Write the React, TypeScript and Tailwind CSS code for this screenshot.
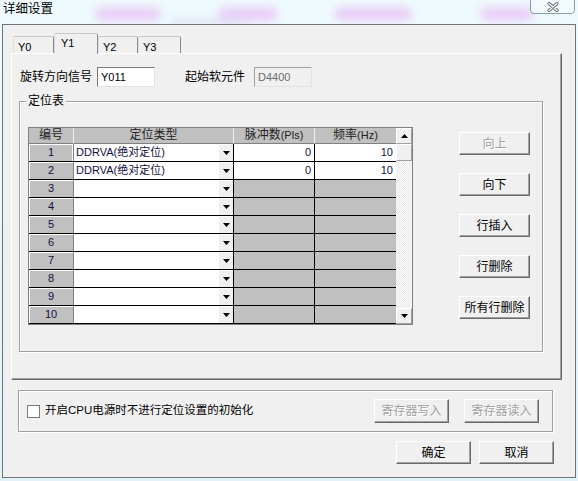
import React from 'react';

const rows = [
  { n: 1, type: 'DDRVA(绝对定位)', pls: '0', hz: '10' },
  { n: 2, type: 'DDRVA(绝对定位)', pls: '0', hz: '10' },
  { n: 3 },
  { n: 4 },
  { n: 5 },
  { n: 6 },
  { n: 7 },
  { n: 8 },
  { n: 9 },
  { n: 10 },
] as { n: number; type?: string; pls?: string; hz?: string }[];

function WinButton({ label, disabled, className = '' }: { label: string; disabled?: boolean; className?: string }) {
  return (
    <div
      className={`flex items-center justify-center border border-t-white border-l-white border-r-[#696969] border-b-[#696969] shadow-[inset_-1px_-1px_0_#a0a0a0] bg-[#f0f0f0] text-[12px] ${
        disabled ? 'text-[#a0a0a0] [text-shadow:1px_1px_0_#fff]' : 'text-black'
      } ${className}`}
    >
      {label}
    </div>
  );
}

function DownTriangle() {
  return (
    <svg width="7" height="4" viewBox="0 0 7 4">
      <path d="M0 0h7L3.5 4z" fill="#000" />
    </svg>
  );
}

function UpTriangle() {
  return (
    <svg width="7" height="4" viewBox="0 0 7 4">
      <path d="M0 4h7L3.5 0z" fill="#000" />
    </svg>
  );
}

function Table() {
  return (
    <div className="flex border border-[#808080] bg-[#c0c0c0] w-[385px] h-[198px]">
      <div className="flex flex-col w-[367px]">
        <div className="flex h-[16px] text-[12px] leading-[15px] text-[#222]">
          <div className="w-[45px] bg-[#c0c0c0] border-r border-r-[#f0f0f0] border-b border-b-[#808080] text-center">编号</div>
          <div className="w-[160px] bg-[#c0c0c0] border-r border-r-[#f0f0f0] border-b border-b-[#808080] text-center">定位类型</div>
          <div className="w-[81px] bg-[#c0c0c0] border-r border-r-[#f0f0f0] border-b border-b-[#808080] text-center">
            脉冲数<span className="text-[11px]">(Pls)</span>
          </div>
          <div className="w-[81px] bg-[#c0c0c0] border-b border-b-[#808080] text-center">
            频率<span className="text-[11px]">(Hz)</span>
          </div>
        </div>
        {rows.map((r) => (
          <div key={r.n} className="flex h-[18px] border-b border-black text-[11px] text-[#101040]">
            <div
              className={`w-[45px] flex items-center justify-center bg-[#c0c0c0] border-r border-r-[#808080] ${
                r.n === 1 ? 'shadow-[inset_1px_1px_0_#fff,inset_-1px_0_0_#fff]' : 'shadow-[inset_1px_1px_0_#fff]'
              }`}
            >
              {r.n}
            </div>
            <div className="w-[160px] flex items-stretch bg-white border-r border-black">
              <div className="flex-1 flex items-center pl-[2px] whitespace-nowrap">{r.type ?? ''}</div>
              <div className="w-[15px] flex items-center justify-center bg-[#f0f0f0] border-t border-l border-t-white border-l-white">
                <DownTriangle />
              </div>
            </div>
            <div
              className={`w-[81px] flex items-center justify-end pr-[3px] border-r border-black ${
                r.pls ? 'bg-white' : 'bg-[#c0c0c0]'
              }`}
            >
              {r.pls ?? ''}
            </div>
            <div className={`w-[81px] flex items-center justify-end pr-[3px] ${r.hz ? 'bg-white' : 'bg-[#c0c0c0]'}`}>
              {r.hz ?? ''}
            </div>
          </div>
        ))}
      </div>
      <div className="w-[16px] flex flex-col bg-[repeating-conic-gradient(#ffffff_0_25%,#e6e6e6_0_50%)] bg-[length:2px_2px]">
        <div className="h-[16px] flex items-center justify-center bg-[#f0f0f0] border border-t-white border-l-white border-r-[#a0a0a0] border-b-[#a0a0a0]">
          <UpTriangle />
        </div>
        <div className="h-[17px] bg-[#f0f0f0] border border-t-white border-l-white border-r-[#a0a0a0] border-b-[#a0a0a0]" />
        <div className="flex-1" />
        <div className="h-[16px] flex items-center justify-center bg-[#f0f0f0] border border-t-white border-l-white border-r-[#a0a0a0] border-b-[#a0a0a0]">
          <DownTriangle />
        </div>
      </div>
    </div>
  );
}

export default function App() {
  const tabs = [
    { id: 'Y0', w: 'w-[41px]' },
    { id: 'Y1', w: 'w-[44px]' },
    { id: 'Y2', w: 'w-[40px]' },
    { id: 'Y3', w: 'w-[43px]' },
  ];

  return (
    <div className="relative w-[578px] h-[481px] overflow-hidden bg-gradient-to-b from-[#eefafd] to-[#e3f2f9] font-['Liberation_Sans','Noto_Sans_CJK_SC',sans-serif] text-black">
      {/* glass reflections behind the title */}
      <div className="absolute left-[95px] top-[7px] w-[66px] h-[14px] rounded-full bg-[#e6a6f2] opacity-50 blur-[4px]" />
      <div className="absolute left-[218px] top-[7px] w-[60px] h-[14px] rounded-full bg-[#e6a6f2] opacity-50 blur-[4px]" />
      <div className="absolute left-[334px] top-[7px] w-[78px] h-[14px] rounded-full bg-[#e6a6f2] opacity-50 blur-[4px]" />
      <div className="absolute left-[480px] top-[7px] w-[54px] h-[14px] rounded-full bg-[#e6a6f2] opacity-50 blur-[4px]" />
      <div className="absolute left-[170px] top-[18px] w-[80px] h-[6px] rounded-full bg-[#d9d0ec] opacity-50 blur-[3px]" />

      <div className="relative flex h-[24px]">
        <div className="pl-[3px] pt-[1px] text-[12.5px] leading-[16px]">详细设置</div>
        <div className="ml-auto mr-[3px] w-[45px] h-[15px] -mt-[1px] rounded-b-[4px] border border-[#8a9aa6] bg-[#f4fafd]/60 flex items-start justify-center pt-[2px]">
          <svg width="12" height="10" viewBox="0 0 12 10">
            <path d="M2 1.5l8 7M10 1.5l-8 7" stroke="#5a6168" strokeWidth="3" strokeLinecap="round" />
            <path d="M2 1.5l8 7M10 1.5l-8 7" stroke="#fff" strokeWidth="1.4" strokeLinecap="round" />
          </svg>
        </div>
      </div>

      <div className="relative ml-[2px] w-[574px] h-[454px] border border-[#6e7378] bg-[#f0f0f0]">
        <div className="pl-[8px] pt-[8px]">
          {/* tabs */}
          <div className="flex items-end h-[20px] pl-[2px]">
            {tabs.map((t) =>
              t.id === 'Y1' ? (
                <div
                  key={t.id}
                  className={`${t.w} h-[21px] -mb-[1px] relative z-10 bg-[#f0f0f0] border-t border-l border-r border-t-[#c8c8c8] border-l-[#d8d8d8] border-r-[#8a8a8a] rounded-t-[2px] pl-[6px] pt-[3px] text-[11px] leading-[12px]`}
                >
                  {t.id}
                </div>
              ) : (
                <div
                  key={t.id}
                  className={`${t.w} h-[17px] bg-[#f0f0f0] border-t border-l border-r border-t-[#c8c8c8] border-l-[#e0e0e0] border-r-[#8a8a8a] rounded-t-[2px] pl-[4px] pt-[4px] text-[11px] leading-[12px]`}
                >
                  {t.id}
                </div>
              )
            )}
          </div>

          {/* tab panel */}
          <div className="w-[551px] h-[327px] border border-t-white border-l-white border-r-[#696969] border-b-[#696969] shadow-[inset_-1px_-1px_0_#a0a0a0] bg-[#f0f0f0]">
            <div className="flex items-center mt-[13px] ml-[8px] h-[20px] text-[12px]">
              <span className="w-[72px] whitespace-nowrap">旋转方向信号</span>
              <div className="ml-[5px] w-[58px] h-[20px] flex items-center pl-[3px] bg-white border border-t-[#7a7a7a] border-l-[#7a7a7a] border-r-[#e3e3e3] border-b-[#e3e3e3] text-[11px]">
                Y011
              </div>
              <span className="ml-[30px] w-[60px] whitespace-nowrap">起始软元件</span>
              <div className="ml-[9px] w-[58px] h-[20px] flex items-center pl-[3px] bg-[#f0f0f0] border border-t-[#a0a0a0] border-l-[#a0a0a0] border-r-[#e3e3e3] border-b-[#e3e3e3] text-[11px] text-[#6d6d6d]">
                D4400
              </div>
            </div>

            {/* group box */}
            <div className="relative mt-[14px] ml-[7px] w-[524px] h-[251px] border border-[#a0a0a0] shadow-[inset_1px_1px_0_#fff,1px_1px_0_#fff]">
              <span className="absolute left-[6px] -top-[8px] px-[2px] bg-[#f0f0f0] text-[12px] leading-[14px]">定位表</span>
              <div className="flex items-start pl-[8px] pt-[25px]">
                <Table />
                <div className="flex flex-col gap-[18px] ml-[46px] pt-[5px]">
                  <WinButton label="向上" disabled className="w-[71px] h-[23px]" />
                  <WinButton label="向下" className="w-[71px] h-[23px]" />
                  <WinButton label="行插入" className="w-[71px] h-[23px]" />
                  <WinButton label="行删除" className="w-[71px] h-[23px]" />
                  <WinButton label="所有行删除" className="w-[71px] h-[23px]" />
                </div>
              </div>
            </div>
          </div>

          {/* bottom group */}
          <div className="mt-[10px] ml-[7px] w-[535px] h-[42px] flex items-center border border-[#a0a0a0] shadow-[inset_1px_1px_0_#fff,1px_1px_0_#fff]">
            <div className="ml-[8px] w-[13px] h-[13px] bg-white border border-[#7a7a7a]" />
            <span className="ml-[5px] text-[11.5px] whitespace-nowrap">开启CPU电源时不进行定位设置的初始化</span>
            <WinButton label="寄存器写入" disabled className="ml-auto w-[75px] h-[24px]" />
            <WinButton label="寄存器读入" disabled className="ml-[15px] mr-[13px] w-[75px] h-[24px]" />
          </div>

          <div className="flex mt-[9px] ml-[385px] gap-[8px]">
            <WinButton label="确定" className="w-[75px] h-[23px]" />
            <WinButton label="取消" className="w-[75px] h-[23px]" />
          </div>
        </div>
      </div>
    </div>
  );
}
